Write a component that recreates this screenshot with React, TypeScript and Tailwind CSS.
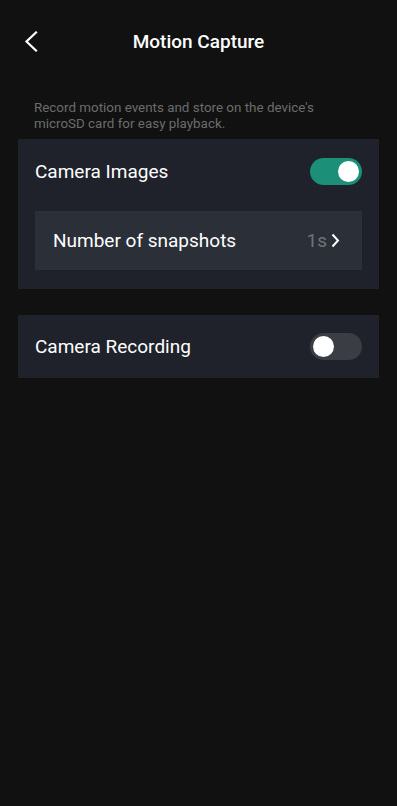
import React from 'react';

const Toggle: React.FC<{ on: boolean }> = ({ on }) => (
  <div
    className={`flex h-[27px] w-[52px] items-center rounded-full px-[3px] ${
      on ? 'justify-end bg-[#1b8f78]' : 'justify-start bg-[#3a3d43]'
    }`}
  >
    <div className="h-[21px] w-[21px] rounded-full bg-white" />
  </div>
);

const App: React.FC = () => {
  return (
    <div
      className="min-h-[806px] w-full bg-[#111111] text-white"
      style={{ fontFamily: 'Roboto, "Noto Sans", sans-serif' }}
    >
      {/* header */}
      <div className="relative flex h-[84px] items-center justify-center">
        <button className="absolute left-[24px] top-[31px]">
          <svg width="14" height="21" viewBox="0 0 14 21" fill="none">
            <path d="M12 1.5 L2.5 10.5 L12 19.5" stroke="white" strokeWidth="2.2" strokeLinecap="square" />
          </svg>
        </button>
        <h1 className="text-[19px] font-medium">Motion Capture</h1>
      </div>

      <p className="px-[34px] pt-[16px] text-[13.4px] leading-[16px] text-[#6c6c6c]">
        Record motion events and store on the device's microSD card for easy playback.
      </p>

      {/* camera images */}
      <div className="mx-[18px] mt-[7px] bg-[#1f222a] pl-[17px] pr-[17px] pb-[19px]">
        <div className="flex h-[64px] items-center justify-between">
          <span className="pt-[2px] text-[19px]">Camera Images</span>
          <Toggle on />
        </div>
        <div className="mt-[8px] flex h-[59px] items-center justify-between bg-[#2a2f38] pl-[18px] pr-[22px]">
          <span className="pt-[1px] text-[19px]">Number of snapshots</span>
          <div className="flex items-center gap-[4px]">
            <span className="pt-[1px] text-[19px] text-[#6f737a]">1s</span>
            <svg width="9" height="15" viewBox="0 0 9 15" fill="none">
              <path d="M1.5 1.5 L7 7.5 L1.5 13.5" stroke="white" strokeWidth="2" />
            </svg>
          </div>
        </div>
      </div>

      {/* camera recording */}
      <div className="mx-[18px] mt-[26px] flex h-[63px] items-center justify-between bg-[#1f222a] pl-[17px] pr-[17px]">
        <span className="pt-[2px] text-[19px]">Camera Recording</span>
        <Toggle on={false} />
      </div>
    </div>
  );
};

export default App;
